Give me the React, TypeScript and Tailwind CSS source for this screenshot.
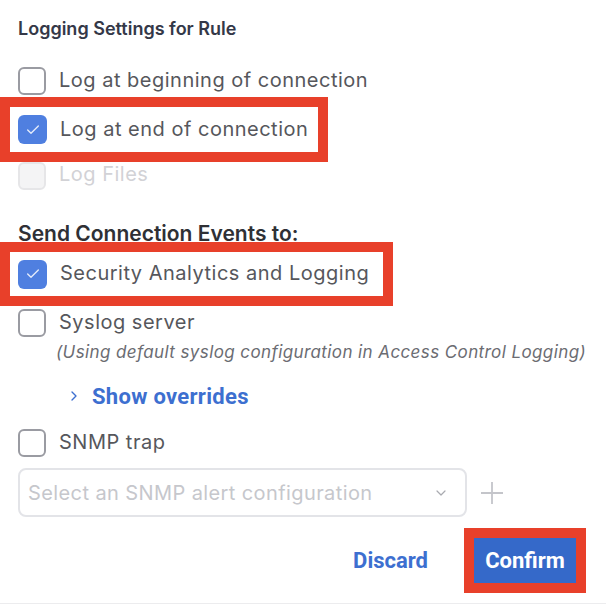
import { Check, ChevronDown, ChevronRight } from "lucide-react";

type BoxProps = { checked?: boolean; disabled?: boolean };

const Box = ({ checked, disabled }: BoxProps) => {
  if (checked) {
    return (
      <span className="flex h-[29px] w-[29px] shrink-0 items-center justify-center rounded-[6px] bg-[#4f7fe0]">
        <Check className="h-[16px] w-[16px] text-white/85" strokeWidth={2} />
      </span>
    );
  }
  return (
    <span
      className={
        disabled
          ? "h-[28px] w-[28px] shrink-0 rounded-[6px] border-2 border-[#e6e6e8] bg-[#f4f4f5]"
          : "h-[28px] w-[28px] shrink-0 rounded-[6px] border-2 border-[#9a9ba2] bg-white"
      }
    />
  );
};

const Row = ({ label, checked, disabled, h = "h-[30px]" }: BoxProps & { label: string; h?: string }) => (
  <div className={`flex items-center gap-[13px] ${h}`}>
    <Box checked={checked} disabled={disabled} />
    <span
      className={
        disabled
          ? "text-[20px] leading-none tracking-[0.5px] text-[#d2d2d6] -mt-[5px]"
          : "text-[20px] leading-none tracking-[0.5px] text-[#56575c] -mt-[2px]"
      }
    >
      {label}
    </span>
  </div>
);

export default function App() {
  return (
    <div className="min-h-[606px] bg-white font-['Inter',sans-serif]">
      <div className="flex flex-col px-[18px] pt-[14px]">
        <div className="flex h-[28px] items-center text-[18px] font-semibold text-[#343848]">
          Logging Settings for Rule
        </div>

        <div className="mt-[24px]">
          <Row label="Log at beginning of connection" />
        </div>

        <div className="-ml-[18px] mt-[1px] w-[328px] border-[10px] border-[#e8402a] pl-[8px]">
          <Row label="Log at end of connection" checked h="h-[45px]" />
        </div>

        <Row label="Log Files" disabled h="h-[28px]" />

        <div className="mt-[34px] flex h-[18px] items-center pt-[2px] text-[21px] font-semibold text-[#2f3035]">
          Send Connection Events to:
        </div>

        <div className="-ml-[18px] w-[393px] border-[10px] border-[#e8402a] pl-[8px]">
          <Row label="Security Analytics and Logging" checked h="h-[44px]" />
        </div>

        <div className="mt-[2px]">
          <Row label="Syslog server" />
        </div>

        <div className="ml-[38px] mt-[3px] flex h-[24px] items-center text-[17px] italic tracking-[0.4px] text-[#6b6c72]">
          (Using default syslog configuration in Access Control Logging)
        </div>

        <div className="ml-[48px] mt-[19px] flex h-[24px] items-center gap-[10px] font-['Roboto',sans-serif] text-[22px] font-bold tracking-[0.3px] text-[#3d6fd0]">
          <ChevronRight className="h-[16px] w-[16px]" strokeWidth={2} />
          <span>Show overrides</span>
        </div>

        <div className="mt-[20px]">
          <Row label="SNMP trap" h="h-[29px]" />
        </div>

        <div className="mt-[11px] flex items-center gap-[13px]">
          <div className="flex h-[49px] w-[449px] items-center justify-between rounded-[8px] border-2 border-[#e3e4e8] pl-[8px] pr-[16px]">
            <span className="text-[20px] tracking-[0.4px] text-[#c6c7cc]">Select an SNMP alert configuration</span>
            <ChevronDown className="h-[16px] w-[16px] text-[#a9aab0]" strokeWidth={1.8} />
          </div>
          <svg width="24" height="24" viewBox="0 0 24 24" className="text-[#c4c5ca]">
            <path d="M12 1v22M1 12h22" stroke="currentColor" strokeWidth="1.8" fill="none" />
          </svg>
        </div>

        <div className="mt-[11px] flex h-[65px] items-center justify-end gap-[36px] pr-[2px]">
          <button className="font-['Roboto',sans-serif] text-[22px] font-bold text-[#3d6fd0]">Discard</button>
          <div className="border-[10px] border-[#e8402a]">
            <button className="flex h-[45px] w-[102px] items-center justify-center bg-[#3569c9] font-['Roboto',sans-serif] text-[22px] font-bold text-white">
              Confirm
            </button>
          </div>
        </div>
      </div>
      <div className="mt-[10px] h-px bg-[#ececee]" />
    </div>
  );
}
